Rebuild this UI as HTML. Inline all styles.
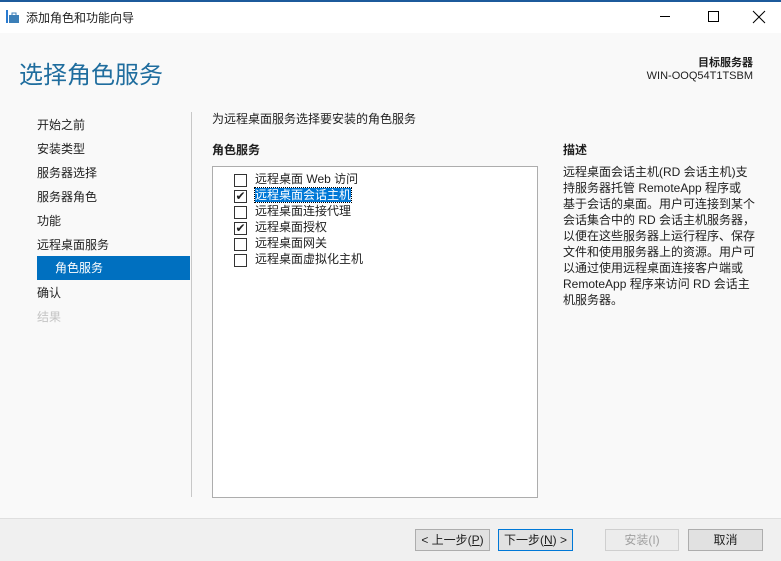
<!DOCTYPE html><html><head><meta charset="utf-8"><style>
*{margin:0;padding:0;box-sizing:border-box}
body{width:781px;height:561px;overflow:hidden;background:#f9f9f9;font-family:"Liberation Sans","Noto Sans CJK SC",sans-serif;font-size:12px;color:#1e1e1e;position:relative}
.a{position:absolute;white-space:nowrap}
.cb{position:absolute;left:234px;width:13px;height:13px;border:1px solid #333;background:#fff;font-size:12px;line-height:11px;text-align:center}
.btn{position:absolute;top:529px;height:22px;border:1px solid #adadad;background:#e1e1e1;text-align:center;line-height:20px;font-size:12px}
</style></head><body>
<div class="a" style="left:0;top:0;width:781px;height:2px;background:#1c5a9b"></div>
<div class="a" style="left:0;top:2px;width:781px;height:31px;background:#fff"></div>
<svg class="a" style="left:6px;top:10px" width="13" height="14"><rect x="0" y="0" width="2" height="13" fill="#2a7bd0"/><rect x="3" y="5" width="10" height="8" fill="#3c7fb8"/><rect x="6" y="3" width="4" height="3" fill="none" stroke="#3c7fb8"/></svg>
<div class="a" style="left:26px;top:9px">添加角色和功能向导</div>
<div class="a" style="left:660px;top:16px;width:10px;height:1px;background:#000"></div>
<div class="a" style="left:708px;top:11px;width:11px;height:11px;border:1px solid #000"></div>
<svg class="a" style="left:752px;top:10px" width="14" height="14"><path d="M1 1L13 13M13 1L1 13" stroke="#000" stroke-width="1"/></svg>
<div class="a" style="left:19px;top:55px;font-size:24px;color:#1f6d9e">选择角色服务</div>
<div class="a" style="right:28px;top:57px;font-size:11px;line-height:12px;font-weight:bold;text-align:right">目标服务器</div>
<div class="a" style="right:28px;top:70px;font-size:11px;line-height:12px;text-align:right">WIN-OOQ54T1TSBM</div>
<div class="a" style="left:37px;top:113px;line-height:24px">开始之前<br>安装类型<br>服务器选择<br>服务器角色<br>功能<br>远程桌面服务</div>
<div class="a" style="left:37px;top:256px;width:153px;height:24px;background:#0070c0;color:#fff;padding-left:18px;line-height:24px">角色服务</div>
<div class="a" style="left:37px;top:281px;line-height:24px">确认<br><span style="color:#c4c4c4">结果</span></div>
<div class="a" style="left:191px;top:112px;width:1px;height:385px;background:#c8c8c8"></div>
<div class="a" style="left:212px;top:110px">为远程桌面服务选择要安装的角色服务</div>
<div class="a" style="left:212px;top:141px;font-weight:bold">角色服务</div>
<div class="a" style="left:212px;top:166px;width:326px;height:332px;border:1px solid #adadad;background:#fff"></div>
<div class="a" style="left:255px;top:171px;line-height:16px">远程桌面 Web 访问<br><span style="background:#0078d7;color:#fff;outline:1px dotted #000">远程桌面会话主机</span><br>远程桌面连接代理<br>远程桌面授权<br>远程桌面网关<br>远程桌面虚拟化主机</div>
<div class="cb" style="top:174px"></div>
<div class="cb" style="top:190px">✔</div>
<div class="cb" style="top:206px"></div>
<div class="cb" style="top:222px">✔</div>
<div class="cb" style="top:238px"></div>
<div class="cb" style="top:254px"></div>
<div class="a" style="left:563px;top:141px;font-weight:bold">描述</div>
<div class="a" style="left:563px;top:164px;line-height:16px">远程桌面会话主机(RD 会话主机)支<br>持服务器托管 RemoteApp 程序或<br>基于会话的桌面。用户可连接到某个<br>会话集合中的 RD 会话主机服务器，<br>以便在这些服务器上运行程序、保存<br>文件和使用服务器上的资源。用户可<br>以通过使用远程桌面连接客户端或<br>RemoteApp 程序来访问 RD 会话主<br>机服务器。</div>
<div class="a" style="left:0;top:518px;width:781px;height:43px;background:#f0f0f0;border-top:1px solid #dfdfdf"></div>
<div class="btn" style="left:415px;width:75px">&lt; 上一步(<u>P</u>)</div>
<div class="btn" style="left:498px;width:75px;border:1px solid #0078d7">下一步(<u>N</u>) &gt;</div>
<div class="btn" style="left:605px;width:74px;color:#a0a0a0;background:#ececec;border-color:#cfcfcf">安装(I)</div>
<div class="btn" style="left:688px;width:75px">取消</div>
</body></html>
